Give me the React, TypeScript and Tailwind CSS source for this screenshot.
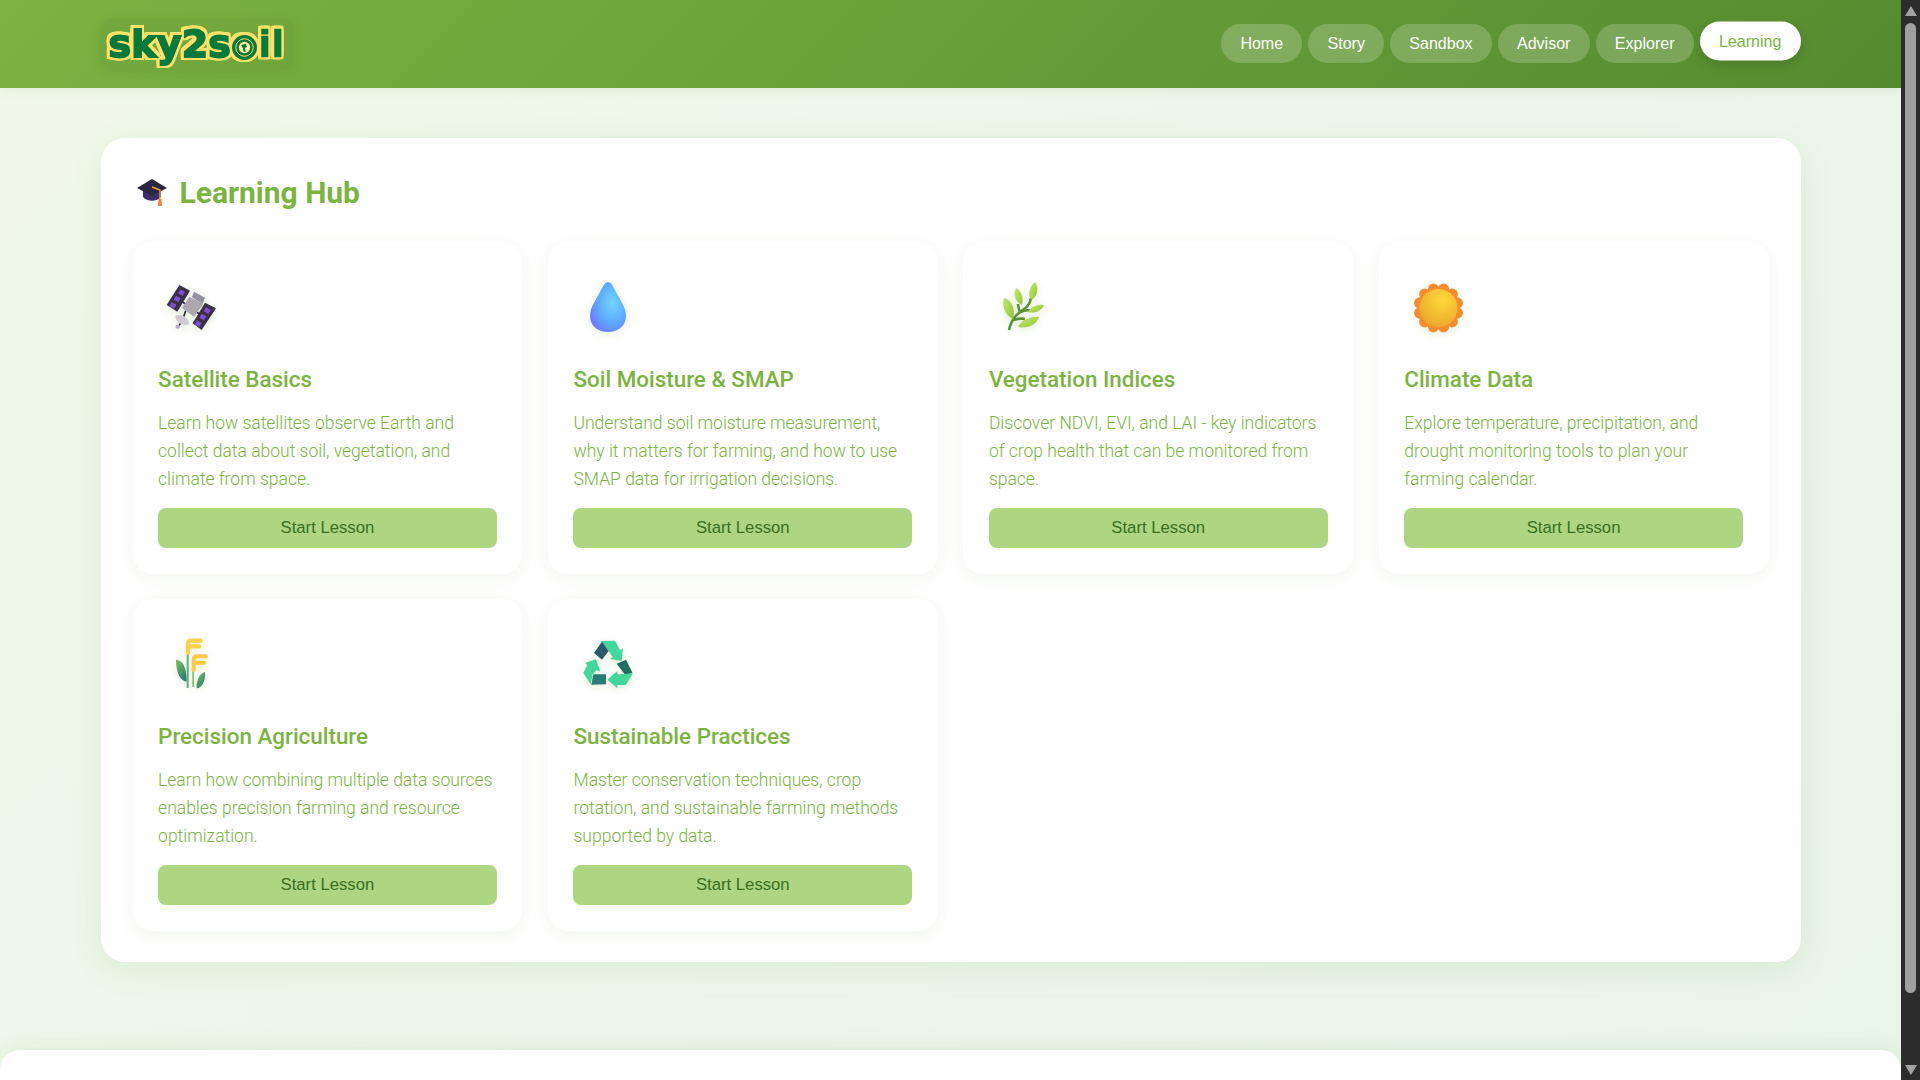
const navItems = ["Home", "Story", "Sandbox", "Advisor", "Explorer"];

function SatelliteIcon() {
  return (
    <svg viewBox="0 0 64 64" className="h-16 w-16 drop-shadow-[0_2px_4px_rgba(124,179,66,0.25)]">
      <g transform="translate(-38 -114) scale(0.3333)">
        <path d="M185 425 L197 432 M226 454 L238 462 M197 452 L191 470 M182 490 L176 498" stroke="#2e2a35" strokeWidth="5" />
        <path d="M178 375 L210 392 L172 455 L140 435 Z" fill="#3b3048" />
        <path d="M255 428 L288 445 L245 510 L218 490 Z" fill="#3b3048" />
        <path d="M181 388 L195 396 L188 408 L174 400 Z M168 407 L182 415 L175 427 L161 419 Z M155 426 L169 434 L162 446 L148 438 Z" fill="#7a4fd0" />
        <path d="M258 442 L272 450 L265 462 L251 454 Z M245 461 L259 469 L252 481 L238 473 Z M231 481 L245 489 L238 501 L224 493 Z" fill="#7a4fd0" />
        <path d="M222 395 L255 413 L248 432 L216 412 Z" fill="#96919e" />
        <path d="M208 410 L250 432 L222 470 L186 444 Z" fill="#aba6b0" />
        <path d="M166 468 C180 460 204 470 208 492 C190 500 170 490 166 468 Z" fill="#cfc9d4" />
        <circle cx="173" cy="500" r="6.5" fill="#b7a8d4" />
      </g>
    </svg>
  );
}

function DropIcon() {
  return (
    <svg viewBox="0 0 64 64" className="h-16 w-16 drop-shadow-[0_2px_4px_rgba(124,179,66,0.2)]">
      <defs>
        <radialGradient id="drop" cx="0.62" cy="0.42" r="0.75">
          <stop offset="0" stopColor="#74d4ff" />
          <stop offset="0.55" stopColor="#5ca8ff" />
          <stop offset="1" stopColor="#7d68ff" />
        </radialGradient>
      </defs>
      <path d="M35 8 C38 8 40 12 43 18 C47 26 53 33 53 42 C53 52 45 58 35 58 C25 58 17 52 17 42 C17 33 23 26 27 18 C30 12 32 8 35 8 Z" fill="url(#drop)" />
    </svg>
  );
}

function LeafIcon() {
  return (
    <svg viewBox="0 0 64 64" className="h-16 w-16 drop-shadow-[0_2px_4px_rgba(124,179,66,0.25)]">
      <defs>
        <linearGradient id="leaf" x1="0" y1="0" x2="1" y2="1">
          <stop offset="0" stopColor="#c8e66a" />
          <stop offset="1" stopColor="#8fc63f" />
        </linearGradient>
      </defs>
      <path d="M20 56 C22 47 25 43 31 38 C37 34 41 31 42 24 M24 46 C28 45 32 44 36 45 M31 38 C34 37 38 36 41 36 M31 38 C30 35 29 33 29 30" stroke="#5f8f3a" strokeWidth="2.6" fill="none" />
      <path d="M15 24 C22 25 27 34 24 45 C18 43 12 34 15 24 Z" fill="url(#leaf)" />
      <path d="M27 14 C32 16 35 24 33 31 C28 29 23 22 27 14 Z" fill="url(#leaf)" />
      <path d="M46 8 C50 13 49 21 43 26 C38 22 40 13 46 8 Z" fill="url(#leaf)" />
      <path d="M55 31 C53 37 45 40 39 38 C42 32 50 30 55 31 Z" fill="url(#leaf)" />
      <path d="M50 43 C48 50 39 55 29 53 C32 46 42 42 50 43 Z" fill="url(#leaf)" />
    </svg>
  );
}

function SunIcon() {
  const bumps = Array.from({ length: 12 }, (_, i) => (i * Math.PI) / 6 + Math.PI / 12);
  return (
    <svg viewBox="0 0 64 64" className="h-16 w-16 drop-shadow-[0_2px_4px_rgba(124,179,66,0.2)]">
      <defs>
        <radialGradient id="sun" cx="0.6" cy="0.3" r="0.85">
          <stop offset="0" stopColor="#ffd93b" />
          <stop offset="1" stopColor="#e8a02a" />
        </radialGradient>
      </defs>
      {bumps.map((a) => (
        <circle key={a} cx={34.5 + 19.5 * Math.cos(a)} cy={34 + 19.5 * Math.sin(a)} r="5.6" fill="#f58c30" />
      ))}
      <circle cx="34.5" cy="34" r="21" fill="#f58c30" />
      <circle cx="34.5" cy="34" r="19" fill="url(#sun)" />
    </svg>
  );
}

function WheatIcon() {
  return (
    <svg viewBox="0 0 64 64" className="h-16 w-16 drop-shadow-[0_2px_4px_rgba(124,179,66,0.2)]">
      <defs>
        <linearGradient id="wheatLeaf" x1="0" y1="0" x2="0.6" y2="1">
          <stop offset="0" stopColor="#7fc15a" />
          <stop offset="1" stopColor="#2f7f78" />
        </linearGradient>
      </defs>
      <g transform="translate(-8 -2) scale(0.3333)">
        <path d="M78 92 C95 92 110 110 110 158 C90 155 78 130 78 92 Z" fill="url(#wheatLeaf)" />
        <path d="M165 128 C168 155 155 178 140 178 C138 155 148 135 165 128 Z" fill="url(#wheatLeaf)" />
        <rect x="110" y="72" width="6" height="105" fill="#5fae7c" />
        <rect x="127" y="120" width="5" height="54" fill="#7fbf6a" />
        <path d="M114 72 L114 44 Q114 35 124 35 L152 35 M116 52 L148 52" stroke="#fdd050" strokeWidth="13" strokeLinecap="round" fill="none" />
        <path d="M131 124 L131 92 Q131 82 141 82 L168 82 M133 101 L162 101" stroke="#fcc948" strokeWidth="12" strokeLinecap="round" fill="none" />
      </g>
    </svg>
  );
}

function RecycleIcon() {
  return (
    <svg viewBox="0 0 64 64" className="h-16 w-16 drop-shadow-[0_2px_4px_rgba(124,179,66,0.2)]">
      <g transform="translate(-3 -2) scale(0.3333)">
        <path d="M92 36 L135 35 L150 64 L159 58 L155 96 L120 90 L128 84 L114 62 Z" fill="#43d79b" />
        <path d="M96 38 L116 66 L96 92 L72 72 Z" fill="#285a6c" />
        <path d="M140 104 L168 92 L188 133 L164 136 Z" fill="#1f6f60" />
        <path d="M188 134 L168 168 L142 168 L142 178 L112 152 L142 126 L142 136 Z" fill="#43d79b" />
        <path d="M70 136 L108 136 L108 166 L64 167 Z" fill="#2b7c74" />
        <path d="M45 102 L78 91 L91 128 L80 123 L68 136 L62 166 L40 132 L52 108 Z" fill="#43d79b" />
      </g>
    </svg>
  );
}

function GradCap() {
  return (
    <svg viewBox="0 0 30 27" className="mr-[13px] h-[27px] w-[30px] shrink-0">
      <path d="M6 11 L6 18 C10 23 20 23 24 18 L24 11 Z" fill="#3c2f6a" />
      <path d="M15 0 L30 9 L15 17 L0 9 Z" fill="#2c2740" />
      <path d="M15 8 L23 11 L23 20" stroke="#e8a83c" strokeWidth="1.4" fill="none" />
      <path d="M21.5 20 L24.5 20 L25 27 L21 27 Z" fill="#f5813f" />
    </svg>
  );
}

function Logo() {
  return (
    <div className="flex h-[50px] w-[192px] items-center justify-center rounded-[10px] bg-[rgba(90,140,50,0.2)] shadow-[0_2px_10px_rgba(85,139,47,0.3)]">
      <span className="flex items-center font-['DejaVu_Sans',sans-serif] text-[38px] leading-none font-bold tracking-[0.2px] text-[#0a7a3c] [-webkit-text-stroke:1.8px_#0a7a3c] [filter:drop-shadow(2.5px_0_0_#ffe169)_drop-shadow(-2.5px_0_0_#ffe169)_drop-shadow(0_2.5px_0_#ffe169)_drop-shadow(0_-2.5px_0_#ffe169)]">
        sky2s
        <svg viewBox="0 0 30 30" className="mx-[1px] mt-[7px] h-[25px] w-[25px] shrink-0">
          <circle cx="15" cy="15" r="15" fill="#0a7a3c" />
          <circle cx="15" cy="15" r="10.5" fill="none" stroke="#ffe169" strokeWidth="1.2" />
          <circle cx="15" cy="15" r="6.8" fill="#f8eda0" />
          <path d="M11 12 L16.5 10.5 L18 14 L15.5 15.5 L16.5 20 L14 20 L13 15.5 Z" fill="#0a7a3c" />
        </svg>
        <span className="[-webkit-text-stroke:0.4px_#0a7a3c]">il</span>
      </span>
    </div>
  );
}

const lessons = [
  { title: "Satellite Basics", description: "Learn how satellites observe Earth and collect data about soil, vegetation, and climate from space.", icon: SatelliteIcon },
  { title: "Soil Moisture & SMAP", description: "Understand soil moisture measurement, why it matters for farming, and how to use SMAP data for irrigation decisions.", icon: DropIcon },
  { title: "Vegetation Indices", description: "Discover NDVI, EVI, and LAI - key indicators of crop health that can be monitored from space.", icon: LeafIcon },
  { title: "Climate Data", description: "Explore temperature, precipitation, and drought monitoring tools to plan your farming calendar.", icon: SunIcon },
  { title: "Precision Agriculture", description: "Learn how combining multiple data sources enables precision farming and resource optimization.", icon: WheatIcon },
  { title: "Sustainable Practices", description: "Master conservation techniques, crop rotation, and sustainable farming methods supported by data.", icon: RecycleIcon },
];

export default function App() {
  return (
    <div className="flex h-screen overflow-hidden bg-[#2c2c2c]">
      <main className="min-w-0 flex-1 overflow-hidden bg-[linear-gradient(135deg,#f1f8e9,#e8f5e9)]">
        <header className="h-[88px] bg-[linear-gradient(135deg,#7cb342,#558b2f)] shadow-[0_2px_10px_rgba(85,139,47,0.1)]">
          <div className="mx-auto flex h-full w-[1700px] items-center justify-between">
            <Logo />
            <nav className="mb-[1px] flex items-center gap-[6px] font-['Liberation_Sans',sans-serif] text-[16.05px]">
              {navItems.map((item) => (
                <a key={item} className="flex h-[39px] items-center rounded-[20px] bg-white/20 px-[19.2px] text-white">
                  {item}
                </a>
              ))}
              <a className="flex h-[39px] -translate-y-[2.5px] items-center rounded-[20px] bg-white px-[19.2px] text-[#7cb342] shadow-[0_4px_12px_rgba(0,0,0,0.15)]">
                Learning
              </a>
            </nav>
          </div>
        </header>

        <section className="mx-auto mt-[50px] w-[1700px] rounded-[24px] bg-white px-8 pt-[32px] pb-[31px] font-['Roboto',sans-serif] shadow-[0_8px_32px_rgba(85,139,47,0.1)]">
          <h2 className="mb-[27px] flex h-[45px] items-center pl-[4px] text-[30px] font-bold text-[#7cb342]">
            <GradCap />
            Learning Hub
          </h2>
          <div className="grid grid-cols-4 gap-[25.6px]">
            {lessons.map((lesson) => (
              <div key={lesson.title} className="rounded-[20px] bg-white p-[25.6px] shadow-[0_4px_20px_rgba(85,139,47,0.08)]">
                <div className="mb-[17.5px] flex h-[77px] items-center">
                  <lesson.icon />
                </div>
                <h3 className="mb-[11.5px] text-[22.4px] leading-[35px] font-medium text-[#7cb342]">{lesson.title}</h3>
                <p className="mb-[15px] text-[17.5px] leading-[28.16px] font-light text-[#7cb342]">{lesson.description}</p>
                <button className="h-10 w-full rounded-lg bg-[#aed581] pb-[1px] font-['Liberation_Sans',sans-serif] text-[16.7px] text-[#38701f]">
                  Start Lesson
                </button>
              </div>
            ))}
          </div>
        </section>

        <section className="mt-[88.5px] h-[200px] rounded-t-[20px] bg-white shadow-[0_-4px_20px_rgba(85,139,47,0.08)]" />
      </main>

      <aside className="flex w-[19px] shrink-0 flex-col items-center">
        <svg viewBox="0 0 12 10" className="mt-[6px] h-[10px] w-[12px]">
          <path d="M6 0 L12 10 L0 10 Z" fill="#a3a3a3" />
        </svg>
        <div className="mt-[7px] h-[970px] w-[11px] rounded-full bg-[#a0a0a0]" />
        <svg viewBox="0 0 12 10" className="mt-auto mb-[5px] h-[10px] w-[12px]">
          <path d="M0 0 L12 0 L6 10 Z" fill="#a3a3a3" />
        </svg>
      </aside>
    </div>
  );
}
